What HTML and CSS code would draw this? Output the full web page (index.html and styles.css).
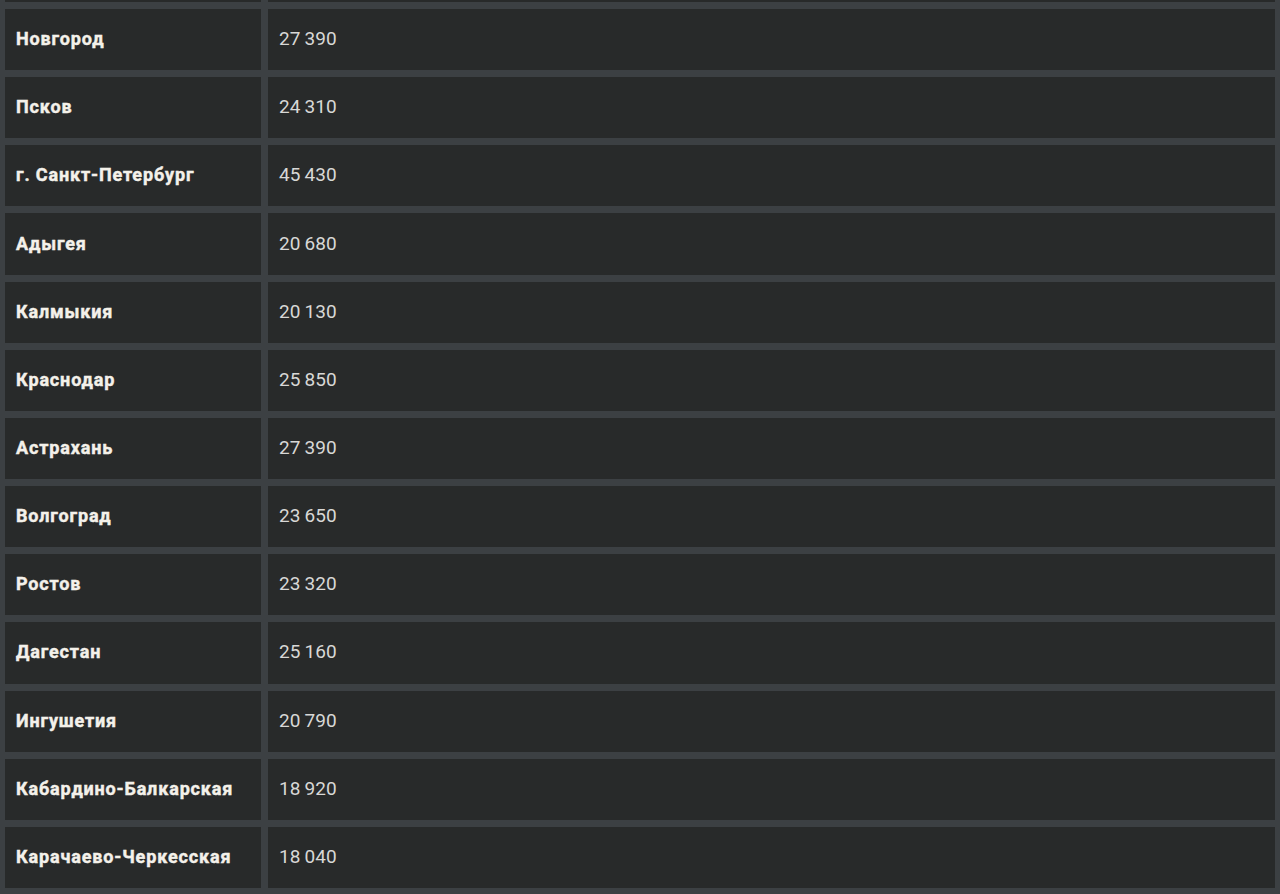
FILE: index.html
```html
<!DOCTYPE html>
<html lang="ru">
<head>
<meta charset="utf-8">
<link rel="stylesheet" href="styles.css">
</head>
<body>
<div class="table">
  <div class="cell name stub"></div><div class="cell value stub"></div>
  <div class="cell name">Новгород</div><div class="cell value">27 390</div>
  <div class="cell name">Псков</div><div class="cell value">24 310</div>
  <div class="cell name">г. Санкт-Петербург</div><div class="cell value">45 430</div>
  <div class="cell name">Адыгея</div><div class="cell value">20 680</div>
  <div class="cell name">Калмыкия</div><div class="cell value">20 130</div>
  <div class="cell name">Краснодар</div><div class="cell value">25 850</div>
  <div class="cell name">Астрахань</div><div class="cell value">27 390</div>
  <div class="cell name">Волгоград</div><div class="cell value">23 650</div>
  <div class="cell name">Ростов</div><div class="cell value">23 320</div>
  <div class="cell name">Дагестан</div><div class="cell value">25 160</div>
  <div class="cell name">Ингушетия</div><div class="cell value">20 790</div>
  <div class="cell name">Кабардино-Балкарская</div><div class="cell value">18 920</div>
  <div class="cell name">Карачаево-Черкесская</div><div class="cell value">18 040</div>
</div>
</body>
</html>
```
FILE: styles.css
```css
html, body {
  margin: 0;
  padding: 0;
  background: #3c4043;
  height: 894px;
  overflow: hidden;
}
.table {
  display: grid;
  grid-template-columns: 256px 1fr;
  grid-template-rows: 2px;
  grid-auto-rows: 61.2px;
  column-gap: 7px;
  row-gap: 6.97px;
  padding: 0 5px;
  font-family: Roboto, "Liberation Sans", sans-serif;
}
.cell {
  background: #282a2a;
  display: flex;
  align-items: center;
  padding-left: 11px;
  padding-bottom: 2px;
}
.stub {
  padding: 0;
}
.name {
  font-size: 18px;
  font-weight: 700;
  color: #f4f1ea;
  letter-spacing: 0.85px;
  -webkit-text-stroke: 0.45px #f4f1ea;
}
.value {
  font-size: 19px;
  font-weight: 400;
  color: #d8d8d6;
  letter-spacing: 0;
  word-spacing: -0.5px;
}
```
